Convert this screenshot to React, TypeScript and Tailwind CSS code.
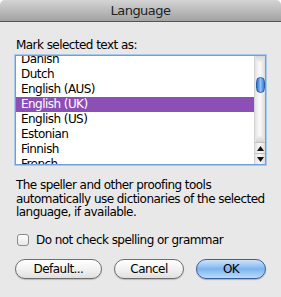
import React from "react";

const langs = ["Danish", "Dutch", "English (AUS)", "English (UK)", "English (US)", "Estonian", "Finnish", "French"];

function Btn({ label, primary }: { label: string; primary?: boolean }) {
  return (
    <div
      className={
        primary
          ? "h-[20px] flex items-center justify-center rounded-full border border-[#3a5f9a] bg-gradient-to-b from-[#cfe4fb] via-[#7db4ef] to-[#b9dcfd] text-black shadow-[0_1px_1px_rgba(0,0,0,0.25)]"
          : "h-[20px] flex items-center justify-center rounded-full border border-[#6e6e6e] bg-gradient-to-b from-[#ffffff] via-[#f2f2f2] to-[#e0e0e0] text-black shadow-[0_1px_1px_rgba(0,0,0,0.2)]"
      }
    >
      {label}
    </div>
  );
}

export default function App() {
  return (
    <div className="w-[281px] h-[297px] bg-white">
      <div
        className="w-[281px] h-[297px] bg-[#e8e8e8] rounded-t-[5px] overflow-hidden flex flex-col text-[12px] tracking-[-0.55px] text-black"
        style={{ fontFamily: '"DejaVu Sans", "Liberation Sans", sans-serif' }}
      >
        <div className="h-[22px] shrink-0 bg-gradient-to-b from-[#d4d4d4] to-[#a3a3a3] border-b border-[#555] flex items-center justify-center text-[13px] text-[#222]">
          Language
        </div>
        <div className="px-[16px] pt-[17px]">
          <div className="leading-[13px] h-[13px]">Mark selected text as:</div>
          <div className="mt-[3px] ml-[-1px] w-[251px] h-[110px] border border-[#6f9edb] shadow-[0_0_0_1px_#a9c8ee] bg-white flex overflow-hidden">
            <div className="flex-1 overflow-hidden">
              <div className="mt-[-4px]">
                {langs.map((l) => (
                  <div
                    key={l}
                    className={
                      "h-[15px] leading-[15px] pl-[5px] " +
                      (l === "English (UK)" ? "bg-[#8c4fb6] text-white" : "")
                    }
                  >
                    {l}
                  </div>
                ))}
              </div>
            </div>
            <div className="w-[11px] flex flex-col border-l border-[#d0d0d0] bg-gradient-to-r from-[#e4e4e4] via-[#fafafa] to-[#dcdcdc]">
              <div className="h-[6px] mx-[1px] rounded-b-full bg-gradient-to-b from-[#d8d8d8] to-[#efefef]" />
              <div className="h-[15px]" />
              <div className="h-[16px] flex justify-center">
                <div className="w-[9px] h-[16px] rounded-full bg-gradient-to-r from-[#2d6fcf] via-[#8fc3fb] to-[#3a7ad6] border border-[#2a5ea8]" />
              </div>
              <div className="flex-1" />
              <div className="h-[6px] mx-[1px] rounded-t-full bg-gradient-to-b from-[#efefef] to-[#d4d4d4]" />
              <div className="h-[11px] flex items-center justify-center border-t border-[#c0c0c0]">
                <svg width="7" height="5" viewBox="0 0 7 5"><path d="M3.5 0 L7 5 L0 5 Z" fill="#111" /></svg>
              </div>
              <div className="h-[11px] flex items-center justify-center border-t border-[#c0c0c0]">
                <svg width="7" height="5" viewBox="0 0 7 5"><path d="M0 0 L7 0 L3.5 5 Z" fill="#111" /></svg>
              </div>
            </div>
          </div>
          <div className="mt-[14px] leading-[13.5px]">
            The speller and other proofing tools automatically use dictionaries of the selected language, if available.
          </div>
          <div className="mt-[11px] flex items-center gap-[7px] ml-[1px]">
            <div className="w-[12px] h-[12px] rounded-[3px] border border-[#8a8a8a] bg-gradient-to-b from-white to-[#e6e6e6]" />
            <span>Do not check spelling or grammar</span>
          </div>
          <div className="mt-[10px] grid grid-cols-[87px_70px_70px] gap-x-[12px] ml-[-1px]">
            <Btn label="Default..." />
            <Btn label="Cancel" />
            <Btn label="OK" primary />
          </div>
        </div>
      </div>
    </div>
  );
}
